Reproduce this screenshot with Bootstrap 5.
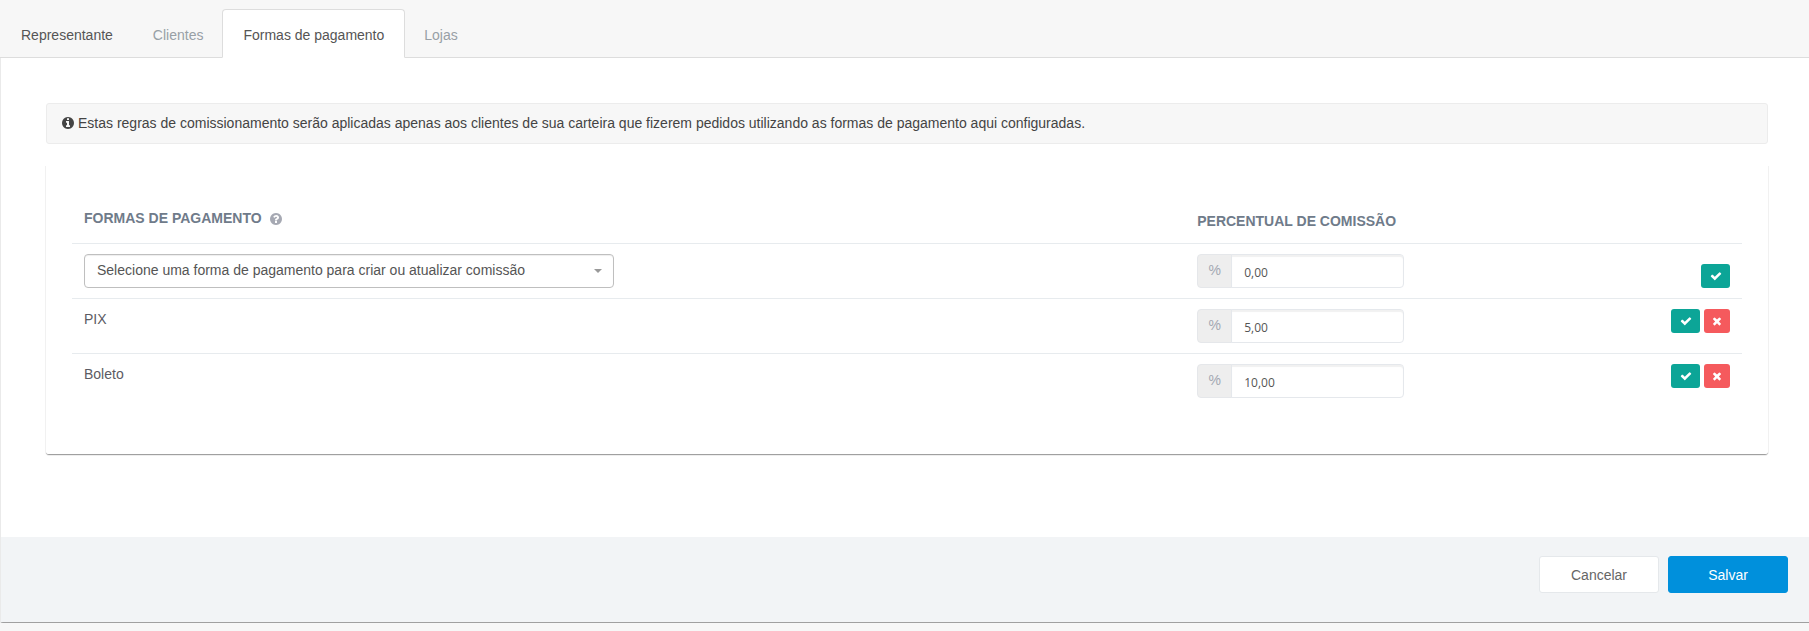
<!DOCTYPE html>
<html lang="pt-BR">
<head>
<meta charset="utf-8">
<meta name="viewport" content="width=device-width, initial-scale=1">
<title>Formas de pagamento</title>
<link href="https://cdn.jsdelivr.net/npm/bootstrap@5.3.0/dist/css/bootstrap.min.css" rel="stylesheet">
<style>
  body { background: #f7f7f7; font-family: "Liberation Sans", Arial, sans-serif; font-size: 14px; line-height: 20px; color: #5b5b63; }
  .rep-tabs { --bs-nav-tabs-border-color: #ddd; padding-top: 9px; }
  .rep-tabs .nav-item + .nav-item { margin-left: -2px; }
  .rep-tabs .nav-link { padding: 15px 20px 13px; color: #98a0a6; border-radius: 4px 4px 0 0; height: 49px; }
  .rep-tabs .nav-link.visited-tab { color: #555; }
  .rep-tabs .nav-link.active { color: #555; background: #fff; border-color: #ddd #ddd #fff; }
  .tab-panel { background: #fff; border-left: 1px solid #eaeaea; border-bottom: 1px solid #a0a0a0; border-radius: 0 0 0 3px; box-shadow: 0 1px 1px #e4e4e4; }
  .panel-main { padding: 45px 41px 82px 45px; }
  .info-box { background: #f7f7f7; border: 1px solid #ececec; border-radius: 3px; color: #444; padding: 9px 15px 10px; margin-bottom: 22px; }
  .rules-card { border-bottom: 1px solid #a0a0a0; border-radius: 0 0 3px 3px; padding: 32px 26px 46px; box-shadow: -1px 0 0 #f1f1f1, 1px 0 0 #f1f1f1, 0 1px 0 #eee; }
  .rules-table { --bs-table-bg: transparent; --bs-table-color: #5b5b63; table-layout: fixed; border-color: #e7ebee; }
  .rules-table > :not(caption) > * > * { padding: 10px 12px; border-color: #e7ebee; }
  .rules-table thead th { color: #6f7b8a; font-weight: 700; height: 45px; vertical-align: top; border-bottom: 1px solid #e7ebee; }
  .rules-table thead th.rate-head { padding-top: 13px; }
  .rules-table tbody tr:last-child td { border-bottom: 0; }
  .rules-table td { height: 55px; }
  .col-method { width: 66.66%; }
  .col-rate { width: 20%; }
  .method-select { height: 34px; max-width: 530px; padding: 4px 32px 6px 12px; font-size: 14px; line-height: 20px; color: #555; border: 1px solid #bfbfbf; border-radius: 4px;
    background-image: url("data:image/svg+xml,%3csvg xmlns='http://www.w3.org/2000/svg' viewBox='0 0 8 4'%3e%3cpath fill='%23999' d='M0 0h8L4 4z'/%3e%3c/svg%3e"); background-size: 8px 4px; background-position: right 11px center; box-shadow: inset 0 1px 1px #eee; }
  .rate-group { max-width: 207px; height: 34px; }
  .rate-group .input-group-text { width: 35px; padding: 0; justify-content: center; background: #eee; border-color: #e5e7ea; color: #a3a8b2; font-size: 14px; border-radius: 4px; }
  .rate-group .form-control { padding: 8px 12px 4px; border-color: #e5e8ec; border-radius: 4px; font: 12px/20px "Open Sans", sans-serif; color: #555; box-shadow: inset 0 2px 1px #f1f1f1; }
  .act-btn { width: 29px; height: 24px; padding: 0; border: 0; border-radius: 3px; color: #fff; }
  .act-save, .act-save:hover { background: #0ca597; color: #fff; }
  .act-remove, .act-remove:hover { width: 26px; background: #f55a5d; color: #fff; }
  .act-btn svg { display: block; margin: auto; }
  .new-rule-action { padding-top: 10px; }
  .panel-foot { background: #f2f4f6; padding: 19px 21px 29px; gap: 9px; }
  .foot-btn { width: 120px; height: 37px; font-size: 14px; line-height: 20px; padding: 7px; border-radius: 3px; }
  .foot-cancel { background: #fff; border-color: #e5e8eb; color: #666; }
  .foot-save { background: #0090dc; color: #fff; border-color: #0090dc; }
</style>
</head>
<body>
<nav>
  <ul class="nav nav-tabs rep-tabs">
    <li class="nav-item"><a class="nav-link visited-tab" href="#representante">Representante</a></li>
    <li class="nav-item"><a class="nav-link" href="#clientes">Clientes</a></li>
    <li class="nav-item"><a class="nav-link active" aria-current="page" href="#formas">Formas de pagamento</a></li>
    <li class="nav-item"><a class="nav-link" href="#lojas">Lojas</a></li>
  </ul>
</nav>
<svg class="d-none" aria-hidden="true">
  <symbol id="check" viewBox="0 0 1792 1792"><path d="M1671 566q0 40-28 68l-724 724-136 136q-28 28-68 28t-68-28l-136-136-362-362q-28-28-28-68t28-68l136-136q28-28 68-28t68 28l294 295 656-657q28-28 68-28t68 28l136 136q28 28 28 68z"/></symbol>
  <symbol id="times" viewBox="0 0 1792 1792"><path d="M1490 1322q0 40-28 68l-136 136q-28 28-68 28t-68-28l-294-294-294 294q-28 28-68 28t-68-28l-136-136q-28-28-28-68t28-68l294-294-294-294q-28-28-28-68t28-68l136-136q28-28 68-28t68 28l294 294 294-294q28-28 68-28t68 28l136 136q28 28 28 68t-28 68l-294 294 294 294q28 28 28 68z"/></symbol>
</svg>
<main class="tab-panel" id="formas">
  <div class="panel-main">
    <div class="info-box d-flex align-items-center">
      <svg class="me-1 flex-shrink-0" width="12" height="12" viewBox="0 0 1536 1536" fill="#444" aria-hidden="true"><path d="M1024 1248v-160q0-14-9-23t-23-9h-96V544q0-14-9-23t-23-9H544q-14 0-23 9t-9 23v160q0 14 9 23t23 9h96v320h-96q-14 0-23 9t-9 23v160q0 14 9 23t23 9h448q14 0 23-9t9-23zM896 352V192q0-14-9-23t-23-9H672q-14 0-23 9t-9 23v160q0 14 9 23t23 9h192q14 0 23-9t9-23zm640 416q0 209-103 385.500T1153.500 1433 768 1536t-385.500-103T103 1153.500 0 768t103-385.500T382.500 103 768 0t385.500 103T1433 382.500 1536 768z"/></svg>
      <span>Estas regras de comissionamento serão aplicadas apenas aos clientes de sua carteira que fizerem pedidos utilizando as formas de pagamento aqui configuradas.</span>
    </div>
    <section class="rules-card">
      <table class="table rules-table mb-0">
        <colgroup><col class="col-method"><col class="col-rate"><col></colgroup>
        <thead>
          <tr>
            <th scope="col">FORMAS DE PAGAMENTO
              <svg class="ms-1" width="12" height="12" viewBox="0 0 1536 1536" fill="#a6a9b3" role="img" aria-label="Ajuda"><path d="M896 1248v-192q0-14-9-23t-23-9H672q-14 0-23 9t-9 23v192q0 14 9 23t23 9h192q14 0 23-9t9-23zm256-672q0-88-55.500-163T958 297t-170-41q-243 0-371 213-15 24 8 42l132 100q7 6 19 6 16 0 25-12 53-68 86-92 34-24 86-24 48 0 85.500 26t37.500 59q0 38-20 61t-68 45q-63 28-115.500 86.500T640 892v36q0 14 9 23t23 9h192q14 0 23-9t9-23q0-19 21.500-49.500T972 829q32-18 49-28.500t46-35 44.500-48 28-60.500 12.500-81zm384 192q0 209-103 385.500T1153.500 1433 768 1536t-385.500-103T103 1153.500 0 768t103-385.500T382.500 103 768 0t385.500 103T1433 382.500 1536 768z"/></svg></th>
            <th scope="col" class="rate-head">PERCENTUAL DE COMISSÃO</th>
            <td aria-hidden="true" class="p-0 h-auto"></td>
          </tr>
        </thead>
        <tbody>
          <tr>
            <td><select class="form-select method-select" aria-label="Forma de pagamento"><option>Selecione uma forma de pagamento para criar ou atualizar comissão</option><option>PIX</option><option>Boleto</option></select></td>
            <td><div class="input-group flex-nowrap rate-group"><label class="input-group-text" for="taxa-nova">%</label><input class="form-control" id="taxa-nova" type="text" value="0,00"></div></td>
            <td><div class="d-flex justify-content-end new-rule-action"><button type="button" class="btn act-btn act-save" aria-label="Confirmar"><svg width="12" height="12" fill="#fff"><use href="#check"/></svg></button></div></td>
          </tr>
          <tr>
            <td>PIX</td>
            <td><div class="input-group flex-nowrap rate-group"><label class="input-group-text" for="taxa-pix">%</label><input class="form-control" id="taxa-pix" type="text" value="5,00"></div></td>
            <td><div class="d-flex justify-content-end gap-1"><button type="button" class="btn act-btn act-save" aria-label="Confirmar PIX"><svg width="12" height="12" fill="#fff"><use href="#check"/></svg></button><button type="button" class="btn act-btn act-remove" aria-label="Remover PIX"><svg width="12" height="12" fill="#fff"><use href="#times"/></svg></button></div></td>
          </tr>
          <tr>
            <td>Boleto</td>
            <td><div class="input-group flex-nowrap rate-group"><label class="input-group-text" for="taxa-boleto">%</label><input class="form-control" id="taxa-boleto" type="text" value="10,00"></div></td>
            <td><div class="d-flex justify-content-end gap-1"><button type="button" class="btn act-btn act-save" aria-label="Confirmar Boleto"><svg width="12" height="12" fill="#fff"><use href="#check"/></svg></button><button type="button" class="btn act-btn act-remove" aria-label="Remover Boleto"><svg width="12" height="12" fill="#fff"><use href="#times"/></svg></button></div></td>
          </tr>
        </tbody>
      </table>
    </section>
  </div>
  <footer class="panel-foot d-flex justify-content-end">
    <button type="button" class="btn foot-btn foot-cancel">Cancelar</button>
    <button type="submit" class="btn foot-btn foot-save">Salvar</button>
  </footer>
</main>
<script src="https://cdn.jsdelivr.net/npm/bootstrap@5.3.0/dist/js/bootstrap.bundle.min.js"></script>
</body>
</html>
